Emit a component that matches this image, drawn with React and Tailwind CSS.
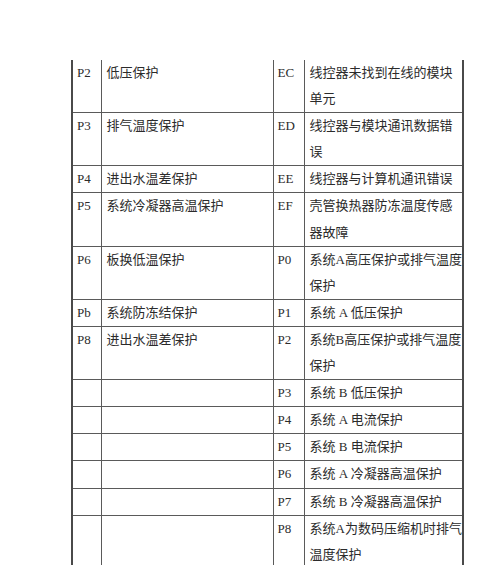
const rows = [
  ['P2', ['低压保护'], 'EC', ['线控器未找到在线的模块', '单元']],
  ['P3', ['排气温度保护'], 'ED', ['线控器与模块通讯数据错', '误']],
  ['P4', ['进出水温差保护'], 'EE', ['线控器与计算机通讯错误']],
  ['P5', ['系统冷凝器高温保护'], 'EF', ['壳管换热器防冻温度传感', '器故障']],
  ['P6', ['板换低温保护'], 'P0', ['系统A高压保护或排气温度', '保护']],
  ['Pb', ['系统防冻结保护'], 'P1', ['系统 A 低压保护']],
  ['P8', ['进出水温差保护'], 'P2', ['系统B高压保护或排气温度', '保护']],
  ['', [], 'P3', ['系统 B 低压保护']],
  ['', [], 'P4', ['系统 A 电流保护']],
  ['', [], 'P5', ['系统 B 电流保护']],
  ['', [], 'P6', ['系统 A 冷凝器高温保护']],
  ['', [], 'P7', ['系统 B 冷凝器高温保护']],
  ['', [], 'P8', ['系统A为数码压缩机时排气', '温度保护']],
]

const cell = 'align-top border-x border-b border-[#5a5a5a] whitespace-nowrap'

function Lines({ lines }) {
  return lines.map((l, i) => <div key={i}>{l}</div>)
}

export default function App() {
  return (
    <div
      className="min-h-[565px] bg-white pt-[60px] pl-[71px] text-[13px] leading-[26.1px] text-[#2b2b2b]"
      style={{ fontFamily: '"Liberation Serif", "Noto Sans CJK SC", serif' }}
    >
      <table className="table-fixed border-collapse w-[391px]">
        <colgroup>
          <col className="w-[29px]" />
          <col className="w-[172px]" />
          <col className="w-[31px]" />
          <col className="w-[159px]" />
        </colgroup>
        <tbody>
          {rows.map(([c1, c2, c3, c4], i) => (
            <tr key={i}>
              <td className={`${cell} border-l-2 border-l-[#4a4a4a] pl-[4px]`}>{c1 || '\u00a0'}</td>
              <td className={`${cell} pl-[5px]`}><Lines lines={c2} /></td>
              <td className={`${cell} pl-[4px]`}>{c3}</td>
              <td className={`${cell} border-r-2 border-r-[#4a4a4a] pl-[5px]`}><Lines lines={c4} /></td>
            </tr>
          ))}
        </tbody>
      </table>
    </div>
  )
}
